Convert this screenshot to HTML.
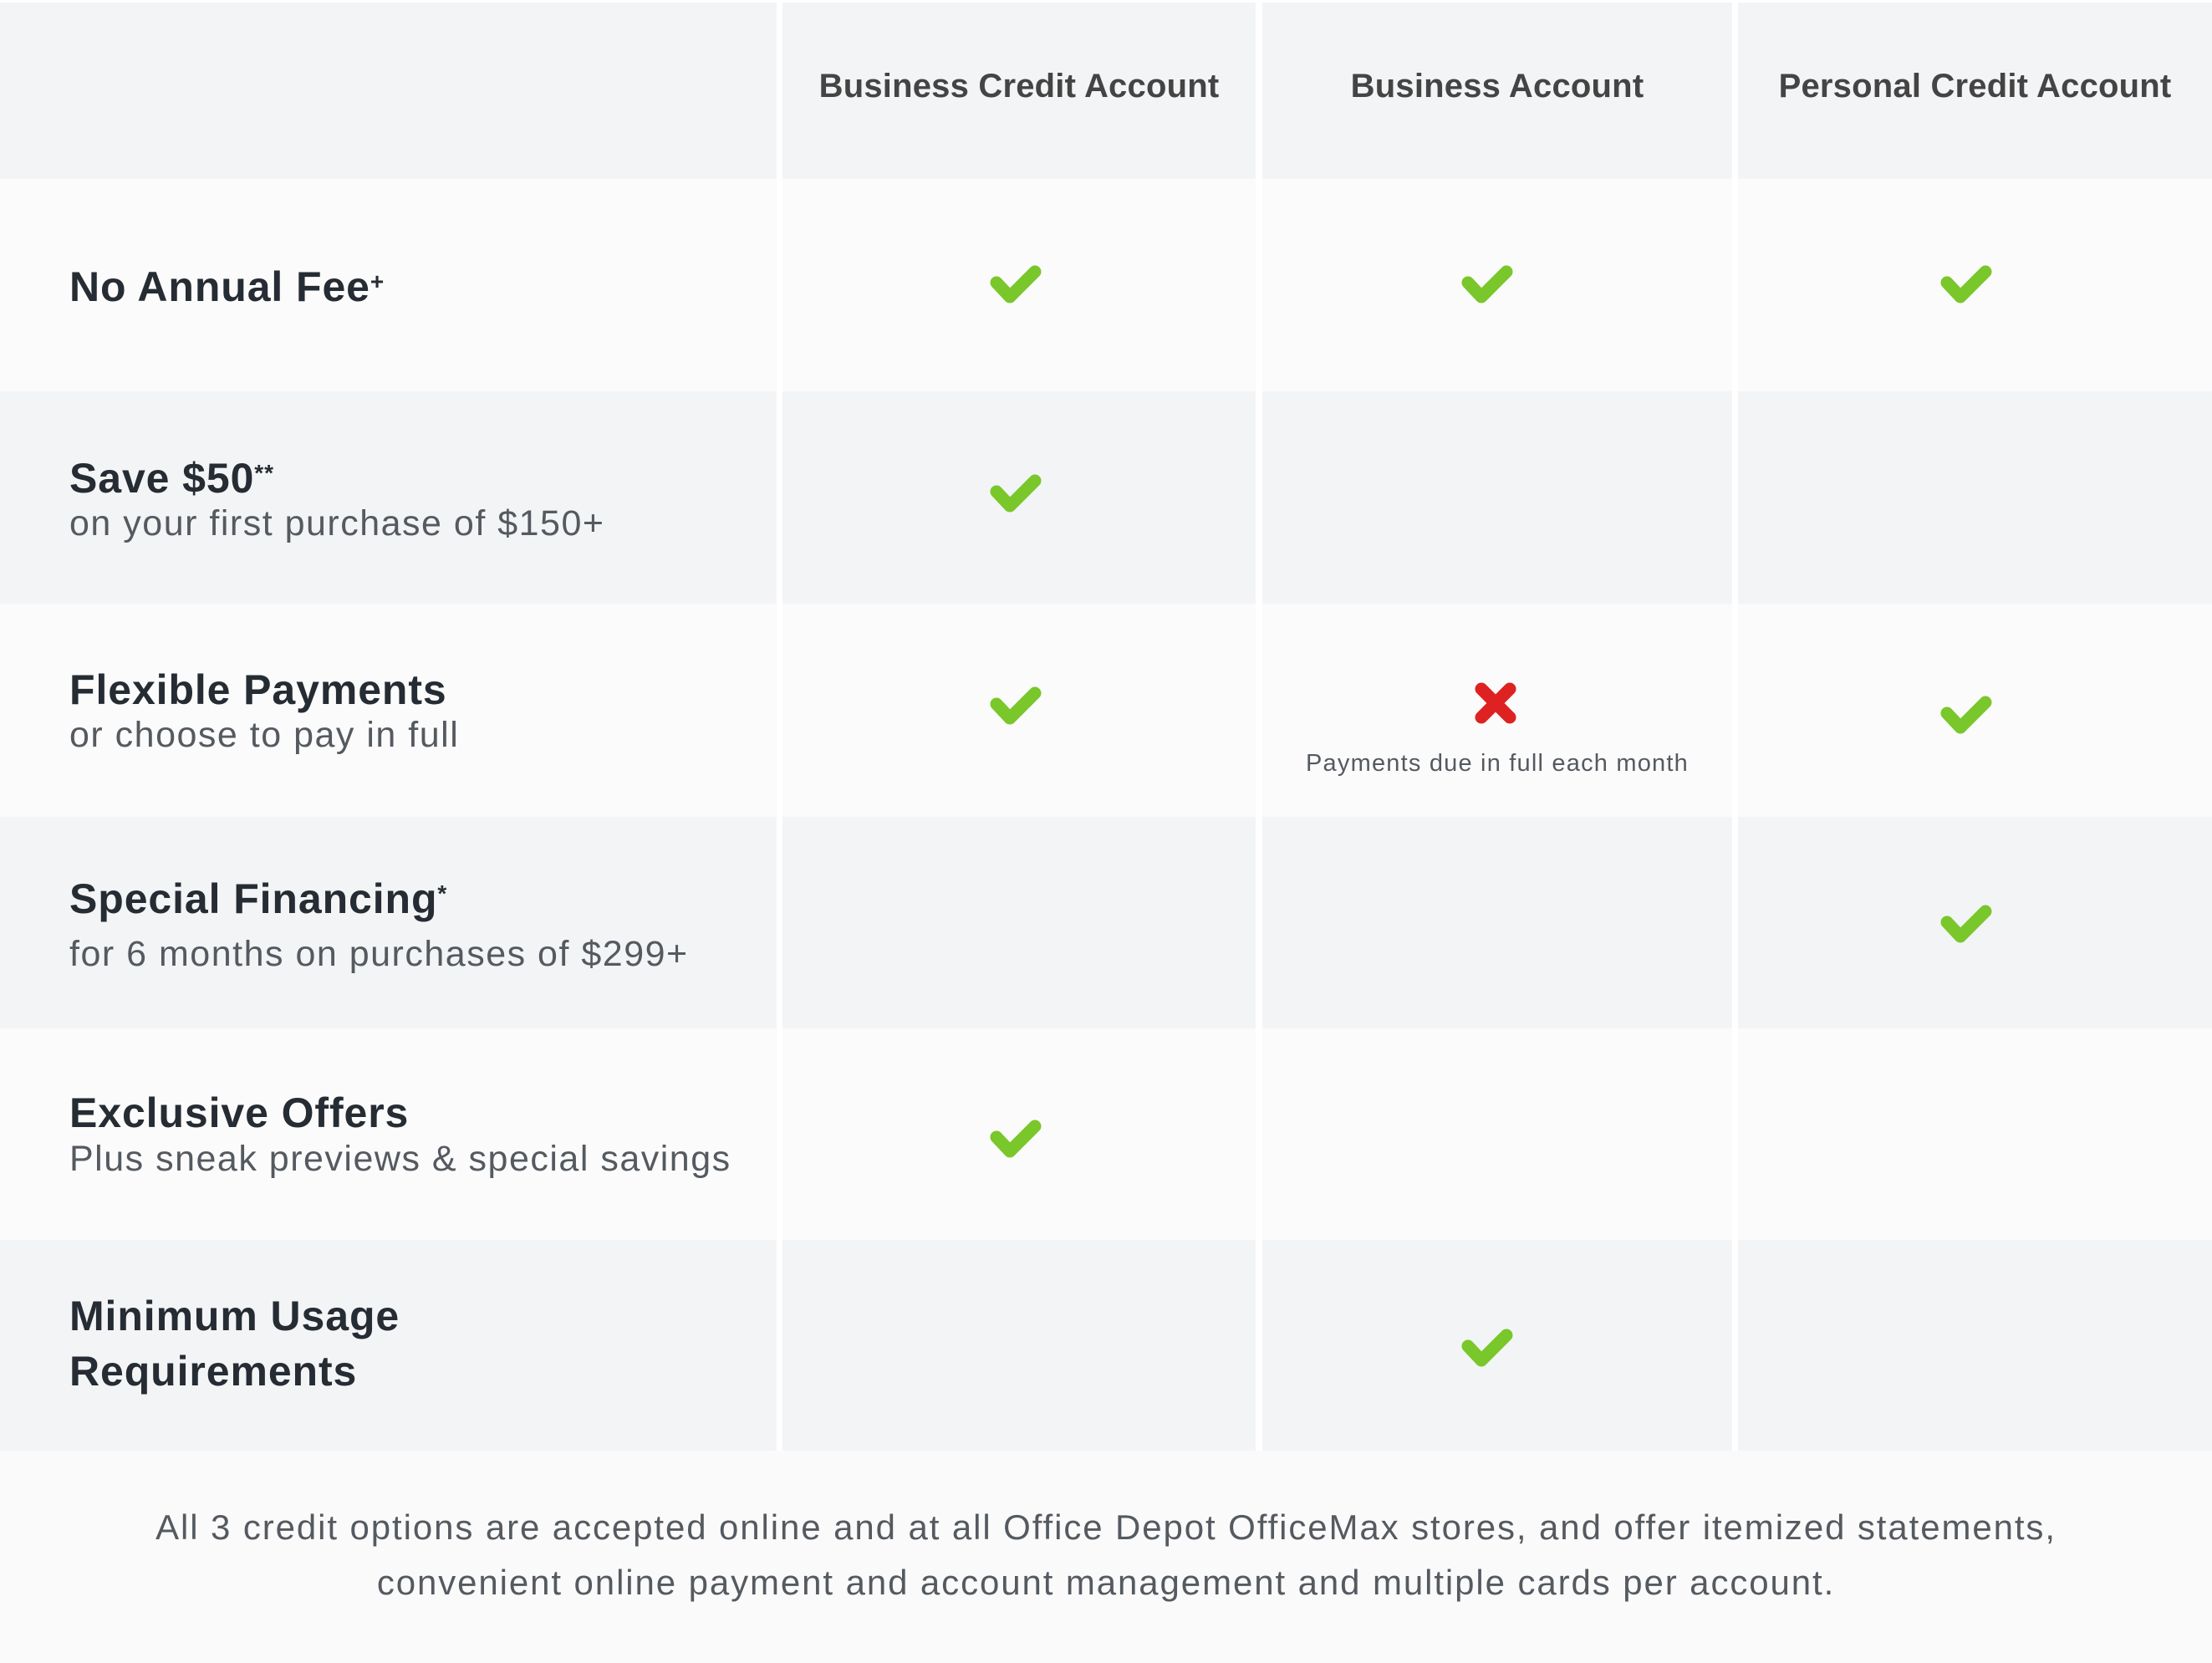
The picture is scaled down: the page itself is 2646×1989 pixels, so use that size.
<!DOCTYPE html>
<html><head><meta charset="utf-8"><style>
*{margin:0;padding:0;box-sizing:border-box}
body{width:2646px;height:1989px;background:#fafafa;position:relative;overflow:hidden;font-family:"Liberation Sans",sans-serif}
.a{position:absolute}
.h{font-weight:bold;color:#444;font-size:40px;line-height:40px;text-align:center;white-space:nowrap;letter-spacing:0.2px}
.t{font-weight:bold;color:#262c33;font-size:50px;line-height:50px;white-space:nowrap;left:83px;letter-spacing:0.9px}
.s{color:#555a60;font-size:43px;line-height:43px;white-space:nowrap;left:83px;letter-spacing:1.5px}
sup{font-size:28px;vertical-align:top;position:relative;top:-6px}
</style></head><body>
<div class="a" style="left:0;top:0;width:2646px;height:1735px;background:#fff"></div>
<div class="a" style="left:0;top:3px;width:929px;height:211px;background:#f3f4f6"></div>
<div class="a" style="left:936px;top:3px;width:566px;height:211px;background:#f3f4f6"></div>
<div class="a" style="left:1510px;top:3px;width:562px;height:211px;background:#f3f4f6"></div>
<div class="a" style="left:2079px;top:3px;width:567px;height:211px;background:#f3f4f6"></div>

<div class="a" style="left:0;top:214px;width:929px;height:254px;background:#fbfbfb"></div>
<div class="a" style="left:936px;top:214px;width:566px;height:254px;background:#fbfbfb"></div>
<div class="a" style="left:1510px;top:214px;width:562px;height:254px;background:#fbfbfb"></div>
<div class="a" style="left:2079px;top:214px;width:567px;height:254px;background:#fbfbfb"></div>

<div class="a" style="left:0;top:468px;width:929px;height:254px;background:#f3f4f6"></div>
<div class="a" style="left:936px;top:468px;width:566px;height:254px;background:#f3f4f6"></div>
<div class="a" style="left:1510px;top:468px;width:562px;height:254px;background:#f3f4f6"></div>
<div class="a" style="left:2079px;top:468px;width:567px;height:254px;background:#f3f4f6"></div>

<div class="a" style="left:0;top:722px;width:929px;height:255px;background:#fbfbfb"></div>
<div class="a" style="left:936px;top:722px;width:566px;height:255px;background:#fbfbfb"></div>
<div class="a" style="left:1510px;top:722px;width:562px;height:255px;background:#fbfbfb"></div>
<div class="a" style="left:2079px;top:722px;width:567px;height:255px;background:#fbfbfb"></div>

<div class="a" style="left:0;top:977px;width:929px;height:253px;background:#f3f4f6"></div>
<div class="a" style="left:936px;top:977px;width:566px;height:253px;background:#f3f4f6"></div>
<div class="a" style="left:1510px;top:977px;width:562px;height:253px;background:#f3f4f6"></div>
<div class="a" style="left:2079px;top:977px;width:567px;height:253px;background:#f3f4f6"></div>

<div class="a" style="left:0;top:1230px;width:929px;height:253px;background:#fbfbfb"></div>
<div class="a" style="left:936px;top:1230px;width:566px;height:253px;background:#fbfbfb"></div>
<div class="a" style="left:1510px;top:1230px;width:562px;height:253px;background:#fbfbfb"></div>
<div class="a" style="left:2079px;top:1230px;width:567px;height:253px;background:#fbfbfb"></div>

<div class="a" style="left:0;top:1483px;width:929px;height:252px;background:#f3f4f6"></div>
<div class="a" style="left:936px;top:1483px;width:566px;height:252px;background:#f3f4f6"></div>
<div class="a" style="left:1510px;top:1483px;width:562px;height:252px;background:#f3f4f6"></div>
<div class="a" style="left:2079px;top:1483px;width:567px;height:252px;background:#f3f4f6"></div>

<div class="a" style="left:0;top:1735px;width:2646px;height:254px;background:#fafafa"></div>

<div class="a h" style="left:936px;width:566px;top:83px">Business Credit Account</div>
<div class="a h" style="left:1510px;width:562px;top:83px">Business Account</div>
<div class="a h" style="left:2079px;width:567px;top:83px">Personal Credit Account</div>

<div class="a t" style="top:318px">No Annual Fee<sup>+</sup></div>
<div class="a t" style="top:547px">Save $50<sup>**</sup></div>
<div class="a s" style="top:605px">on your first purchase of $150+</div>
<div class="a t" style="top:800px">Flexible Payments</div>
<div class="a s" style="top:858px">or choose to pay in full</div>
<div class="a t" style="top:1050px">Special Financing<sup>*</sup></div>
<div class="a s" style="top:1120px">for 6 months on purchases of $299+</div>
<div class="a t" style="top:1306px">Exclusive Offers</div>
<div class="a s" style="top:1365px">Plus sneak previews &amp; special savings</div>
<div class="a t" style="top:1549px">Minimum Usage</div>
<div class="a t" style="top:1615px">Requirements</div>

<svg class="a" style="left:0;top:0" width="2646" height="1989">
<defs><g id="c"><polyline points="9,22 25,39 55,9" fill="none" stroke="#79c72a" stroke-width="15" stroke-linecap="round" stroke-linejoin="round"/></g></defs>
<use href="#c" x="1183" y="316"/>
<use href="#c" x="1747" y="316"/>
<use href="#c" x="2320" y="316"/>
<use href="#c" x="1183" y="566"/>
<use href="#c" x="1183" y="820"/>
<use href="#c" x="2320" y="831"/>
<use href="#c" x="2320" y="1081"/>
<use href="#c" x="1183" y="1338"/>
<use href="#c" x="1747" y="1588"/>
<g stroke="#de2222" stroke-width="15" stroke-linecap="round"><line x1="1772" y1="824" x2="1806" y2="858"/><line x1="1806" y1="824" x2="1772" y2="858"/></g>
</svg>
<div class="a" style="left:1510px;width:562px;top:899px;text-align:center;font-size:29px;line-height:29px;color:#555a60;letter-spacing:1.2px">Payments due in full each month</div>

<div class="a" style="left:0;width:2646px;top:1794px;text-align:center;font-size:42px;line-height:66px;color:#555a60;letter-spacing:1.9px">All 3 credit options are accepted online and at all Office Depot OfficeMax stores, and offer itemized statements,<br>convenient online payment and account management and multiple cards per account.</div>
</body></html>
